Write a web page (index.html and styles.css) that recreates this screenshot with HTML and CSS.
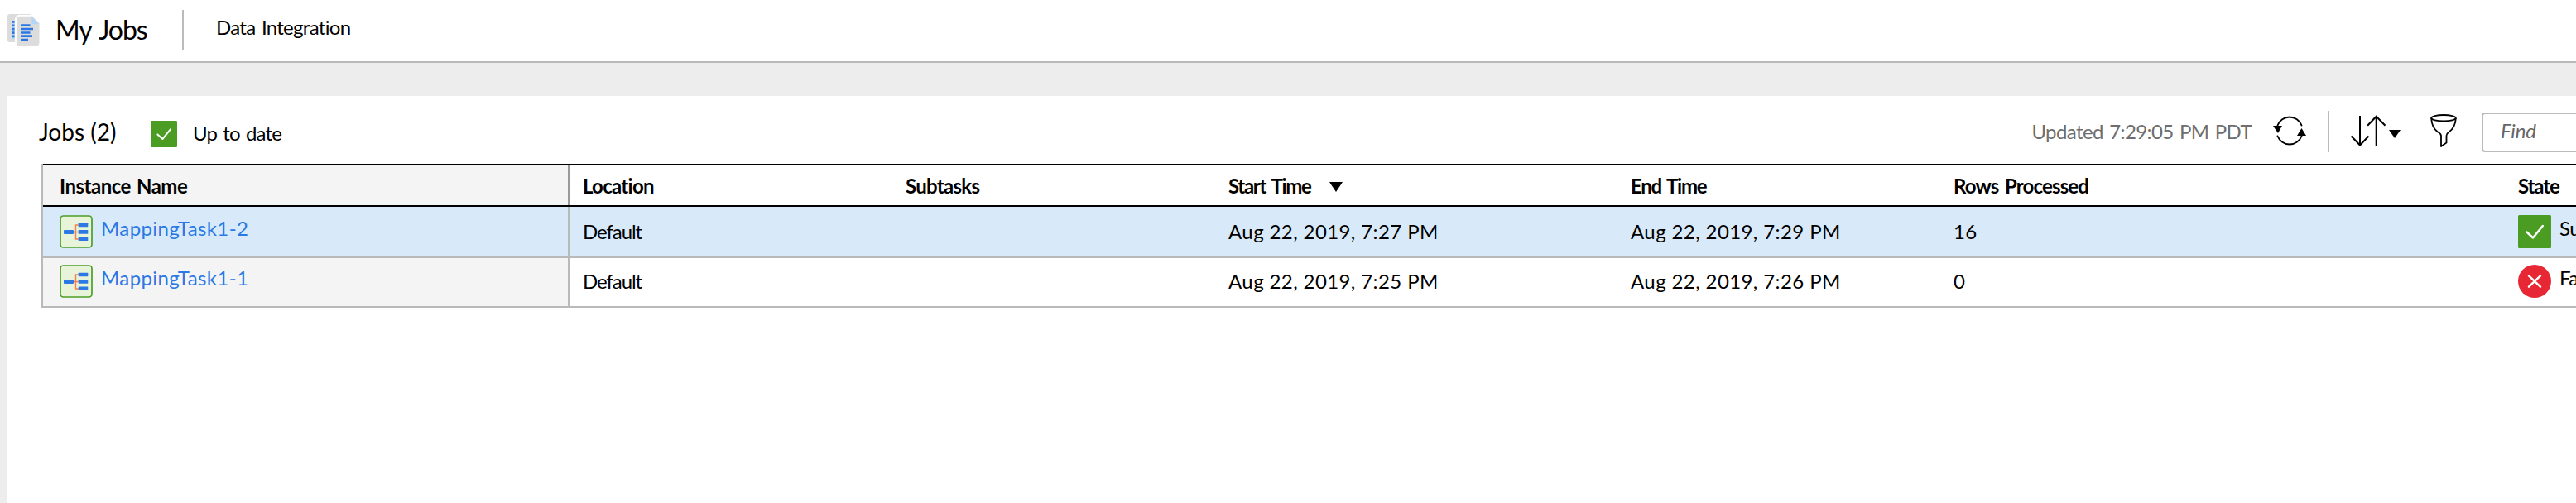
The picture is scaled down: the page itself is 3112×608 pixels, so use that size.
FILE: index.html
```html
<!DOCTYPE html>
<html lang="en">
<head>
<meta charset="utf-8">
<title>My Jobs</title>
<link rel="stylesheet" href="styles.css">
</head>
<body>
<svg class="defs" aria-hidden="true">
  <symbol id="mapping" viewBox="0 0 40 40">
    <rect x="1" y="1" width="38" height="38" rx="3.5" fill="#e7f4da" stroke="#4b9f25" stroke-width="1.7"/>
    <path d="M16 20.5H24M24 12H19.5V29H24" fill="none" stroke="#fa7d4e" stroke-width="1.4"/>
    <g fill="#2c78e4">
      <rect x="5" y="18" width="12" height="5" rx="1"/>
      <rect x="22.700" y="9.700" width="11.600" height="4.600" rx=".5"/>
      <rect x="22.700" y="18" width="11.600" height="4.800" rx=".5"/>
      <rect x="22.700" y="26.500" width="11.600" height="4.600" rx=".5"/>
    </g>
  </symbol>
  <symbol id="check" viewBox="0 0 40 40">
    <rect width="40" height="40" rx="1.500" fill="#4b9c22"/>
    <path d="M10.500 20.500L18 27.500L29.800 13" fill="none" stroke="#fff" stroke-width="2.500" stroke-linecap="round" stroke-linejoin="round"/>
  </symbol>
</svg>

<header class="topbar">
  <svg class="app-icon" viewBox="0 0 39 39">
    <rect x="0" y="0" width="29" height="34" rx="3" fill="#dcdcdc"/>
    <path d="M7 8V30" stroke="#b4d5f8" stroke-width="3.500"/>
    <path d="M7 8V30" stroke="#2b78e4" stroke-width="3" stroke-dasharray="2.700 1.700"/>
    <path d="M14.500 2H29.500L38.500 11V34.500A4 4 0 0 1 34.500 38.500H14.500A4 4 0 0 1 10.500 34.500V6A4 4 0 0 1 14.500 2Z" fill="#dcdcdc"/>
    <path d="M10 38V6A4.500 4.500 0 0 1 14.500 1.800H29.500" fill="none" stroke="#fff" stroke-width="1.800"/>
    <path d="M29.500 1L39 10.500V0Z" fill="#fff"/>
    <path d="M29.300 3.500L38 12.300H31.500Q29.300 12.300 29.300 10Z" fill="#b0d6fb"/>
    <path d="M16 13.500H27.500M16 18H31M16 22.500H27.500M16 26.700H30M16 31H25" stroke="#2b78e4" stroke-width="2.700"/>
  </svg>
  <h1 class="app-title">My Jobs</h1>
  <span class="app-divider"></span>
  <span class="app-context">Data Integration</span>
</header>

<main class="panel">
  <div class="toolbar">
    <h2 class="jobs-count">Jobs (2)</h2>
    <svg class="status-icon"><use href="#check"/></svg>
    <span class="status-text">Up to date</span>
    <span class="updated">Updated 7:29:05 PM PDT</span>
    <svg class="refresh" viewBox="0 0 40 36">
      <path d="M5.500 11.500A15.500 15.500 0 0 1 34.500 11.500M34.500 24.500A15.500 15.500 0 0 1 5.500 24.500" fill="none" stroke="#000" stroke-width="1.900" stroke-linecap="round"/>
      <path d="M0 12H11L6 21ZM29 24L34.500 15L40 24Z"/>
    </svg>
    <span class="tool-divider"></span>
    <svg class="sort" viewBox="0 0 60 36">
      <path d="M11 0V35.500M.5 24.500L11 35.500L21.500 24.500M30.700 36V.8M20.200 11.800L30.700 .8L41.500 11.800" fill="none" stroke="#000" stroke-width="2"/>
      <path d="M46 17H60L53 27Z"/>
    </svg>
    <svg class="filter" viewBox="0 0 32 40">
      <g fill="none" stroke="#000" stroke-width="1.800" stroke-linejoin="round">
        <ellipse cx="16" cy="4.700" rx="14.800" ry="3.700"/>
        <path d="M1.200 4.700C1.500 14 5 18.500 9 21.500Q13 23.500 13 26V39L19.500 34.500V26Q19.500 23.500 22 22C27 18.500 30.500 14 30.800 4.700"/>
      </g>
    </svg>
    <div class="find">Find</div>
  </div>

  <div class="grid">
    <div class="row head">
      <div class="cell name"><span class="h-instance">Instance Name</span></div>
      <div class="cell h-tight">Location</div>
      <div class="cell h-tight">Subtasks</div>
      <div class="cell h-time">Start Time<svg class="sorted" viewBox="0 0 16 12"><path d="M0 0H16L8 12Z"/></svg></div>
      <div class="cell h-time">End Time</div>
      <div class="cell h-rows">Rows Processed</div>
      <div class="cell h-state">State</div>
    </div>
    <div class="row selected">
      <div class="cell name"><svg class="icon"><use href="#mapping"/></svg><a class="link">MappingTask1-2</a></div>
      <div class="cell place">Default</div>
      <div class="cell"></div>
      <div class="cell">Aug 22, 2019, 7:27 PM</div>
      <div class="cell">Aug 22, 2019, 7:29 PM</div>
      <div class="cell">16</div>
      <div class="cell state"><svg class="icon"><use href="#check"/></svg><span class="state-text">Success</span></div>
    </div>
    <div class="row plain">
      <div class="cell name"><svg class="icon"><use href="#mapping"/></svg><a class="link">MappingTask1-1</a></div>
      <div class="cell place">Default</div>
      <div class="cell"></div>
      <div class="cell">Aug 22, 2019, 7:25 PM</div>
      <div class="cell">Aug 22, 2019, 7:26 PM</div>
      <div class="cell">0</div>
      <div class="cell state"><svg class="icon" viewBox="0 0 40 40"><circle cx="20" cy="20" r="20" fill="#e72733"/><path d="M13 13.300L27 26.700M27 13.300L13 26.700" stroke="#fff" stroke-width="2.500" stroke-linecap="round"/></svg><span class="state-text">Failed</span></div>
    </div>
  </div>
</main>
</body>
</html>
```
FILE: styles.css
```css
* { box-sizing: border-box; }
html, body { height: 100%; }
body {
  margin: 0;
  overflow: hidden;
  display: flex;
  flex-direction: column;
  background: #ededed;
  color: #000;
  font: 24px/30px Lato, "Open Sans", sans-serif;
  white-space: nowrap;
}
svg { display: block; flex: none; }
h1, h2 { margin: 0; font-weight: 400; }
.defs { display: none; }

.topbar {
  flex: none;
  height: 76px;
  padding-left: 9px;
  display: flex;
  align-items: flex-start;
  background: #fff;
  border-bottom: 2px solid #b9b9b9;
}
.app-icon { width: 39px; height: 39px; margin-top: 17px; }
.app-title {
  width: 153px;
  margin: 16px 0 0 19px;
  font-size: 32px;
  line-height: 40px;
  letter-spacing: -1.1px;
  word-spacing: 3px;
}
.app-divider { width: 2px; height: 48px; margin-top: 12px; background: #bbb; }
.app-context { margin: 18px 0 0 39px; letter-spacing: -.7px; word-spacing: 2px; }

.panel { flex: 1; margin: 40px 0 0 8px; background: #fff; }
.toolbar { height: 82px; display: flex; align-items: flex-start; }
.jobs-count { width: 135px; margin: 28px 0 0 39px; font-size: 28px; }
.status-icon { width: 32px; height: 32px; margin-top: 30px; }
.status-text { margin: 30px 0 0 19px; letter-spacing: -.8px; word-spacing: 1.8px; }
.updated { margin: 28px 26px 0 auto; letter-spacing: -.6px; word-spacing: 1.8px; color: #6e6e6e; }
.refresh { width: 40px; height: 36px; margin: 24px 26px 0 0; }
.tool-divider { width: 2px; height: 50px; margin: 18px 26px 0 0; background: #bbb; }
.sort { width: 60px; height: 36px; margin: 24px 36px 0 0; overflow: visible; }
.filter { width: 32px; height: 40px; margin: 22px 30px 0 0; }
.find {
  width: 114px;
  height: 48px;
  margin-top: 20px;
  padding: 5px 0 0 21px;
  border: 2px solid #bbb;
  border-right: 0;
  border-radius: 4px 0 0 4px;
  font-style: italic;
  letter-spacing: -.2px;
  color: #666;
}

.grid { margin-left: 42px; border-left: 2px solid #b9b9b9; }
.row {
  display: grid;
  grid-template-columns: 636px 390px 390px 486px 390px 681px 1fr;
  height: 60px;
  border-bottom: 2px solid #b9b9b9;
}
.cell {
  display: flex;
  align-items: flex-start;
  min-width: 0;
  padding: 0 0 0 16px;
  letter-spacing: .4px;
}
.cell.name {
  padding-left: 20px;
  background: #f4f4f4;
  border-right: 2px solid #b9b9b9;
}
.row.head {
  height: 52px;
  border-top: 2px solid #000;
  border-bottom-color: #000;
  font-weight: 700;
}
.head .cell { padding-top: 10px; }
.head .cell.name { border-right-color: #999; }

.row.selected { height: 62px; }
.selected, .selected .cell.name { background: #d8eaf9; }
.selected .cell { padding-top: 15px; }
.selected .name, .selected .state { padding-top: 10px; }
.plain .cell { padding-top: 13px; }
.plain .name, .plain .state { padding-top: 8px; }

.cell.h-tight { letter-spacing: -.72px; }
.cell.h-time { letter-spacing: -1.3px; word-spacing: 2.5px; }
.cell.h-rows { letter-spacing: -.85px; word-spacing: 2.5px; }
.cell.h-state { padding-left: 17px; letter-spacing: -1.1px; }
.cell.place { letter-spacing: -1.06px; }
.h-instance { letter-spacing: -.5px; word-spacing: 1.8px; }
.sorted { width: 16px; height: 12px; margin: 10px 0 0 22px; }

.icon { width: 40px; height: 40px; }
.link { margin: 1px 0 0 10px; letter-spacing: .4px; color: #2c78e4; }
.cell.state { padding-left: 17px; }
.state-text { margin: 1px 0 0 10px; letter-spacing: -.5px; }
```
